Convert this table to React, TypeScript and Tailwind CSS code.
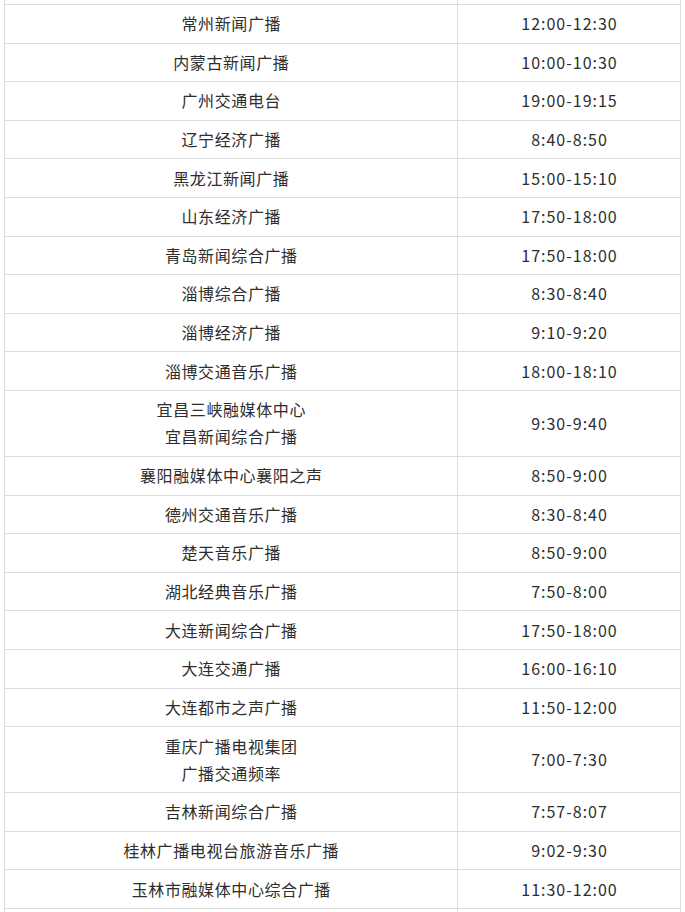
import React from "react";

const rows: [string[], string][] = [
  [["常州新闻广播"], "12:00-12:30"],
  [["内蒙古新闻广播"], "10:00-10:30"],
  [["广州交通电台"], "19:00-19:15"],
  [["辽宁经济广播"], "8:40-8:50"],
  [["黑龙江新闻广播"], "15:00-15:10"],
  [["山东经济广播"], "17:50-18:00"],
  [["青岛新闻综合广播"], "17:50-18:00"],
  [["淄博综合广播"], "8:30-8:40"],
  [["淄博经济广播"], "9:10-9:20"],
  [["淄博交通音乐广播"], "18:00-18:10"],
  [["宜昌三峡融媒体中心", "宜昌新闻综合广播"], "9:30-9:40"],
  [["襄阳融媒体中心襄阳之声"], "8:50-9:00"],
  [["德州交通音乐广播"], "8:30-8:40"],
  [["楚天音乐广播"], "8:50-9:00"],
  [["湖北经典音乐广播"], "7:50-8:00"],
  [["大连新闻综合广播"], "17:50-18:00"],
  [["大连交通广播"], "16:00-16:10"],
  [["大连都市之声广播"], "11:50-12:00"],
  [["重庆广播电视集团", "广播交通频率"], "7:00-7:30"],
  [["吉林新闻综合广播"], "7:57-8:07"],
  [["桂林广播电视台旅游音乐广播"], "9:02-9:30"],
  [["玉林市融媒体中心综合广播"], "11:30-12:00"],
];

export default function App() {
  return (
    <div
      className="w-[685px] h-[912px] overflow-hidden bg-white text-[#2e2e2e] text-[16px]"
      style={{ fontFamily: '"Noto Sans CJK SC", "Noto Sans", sans-serif' }}
    >
      <div className="ml-[4px] w-[677px] border-l border-r border-[#dcdcdc]">
        <div className="grid grid-cols-[453px_222px] h-[4px]">
          <div className="border-r border-[#dcdcdc]" />
          <div />
        </div>
        <div className="border-t border-[#dcdcdc]">
          {rows.map(([names, time], i) => (
            <div
              key={i}
              className={
                "grid grid-cols-[453px_222px] border-b border-[#dcdcdc] " +
                (names.length > 1 ? "h-[66px]" : "h-[38.6px]")
              }
            >
              <div className="border-r border-[#dcdcdc] flex flex-col items-center justify-center leading-[27px] tracking-[0.6px] pl-[0.6px]">
                {names.map((n, j) => (
                  <div key={j}>{n}</div>
                ))}
              </div>
              <div className="flex items-center justify-center leading-[27px] tracking-[1px] pl-[1px]">
                {time}
              </div>
            </div>
          ))}
        </div>
        <div className="grid grid-cols-[453px_222px] h-[10px]">
          <div className="border-r border-[#dcdcdc]" />
          <div />
        </div>
      </div>
    </div>
  );
}
